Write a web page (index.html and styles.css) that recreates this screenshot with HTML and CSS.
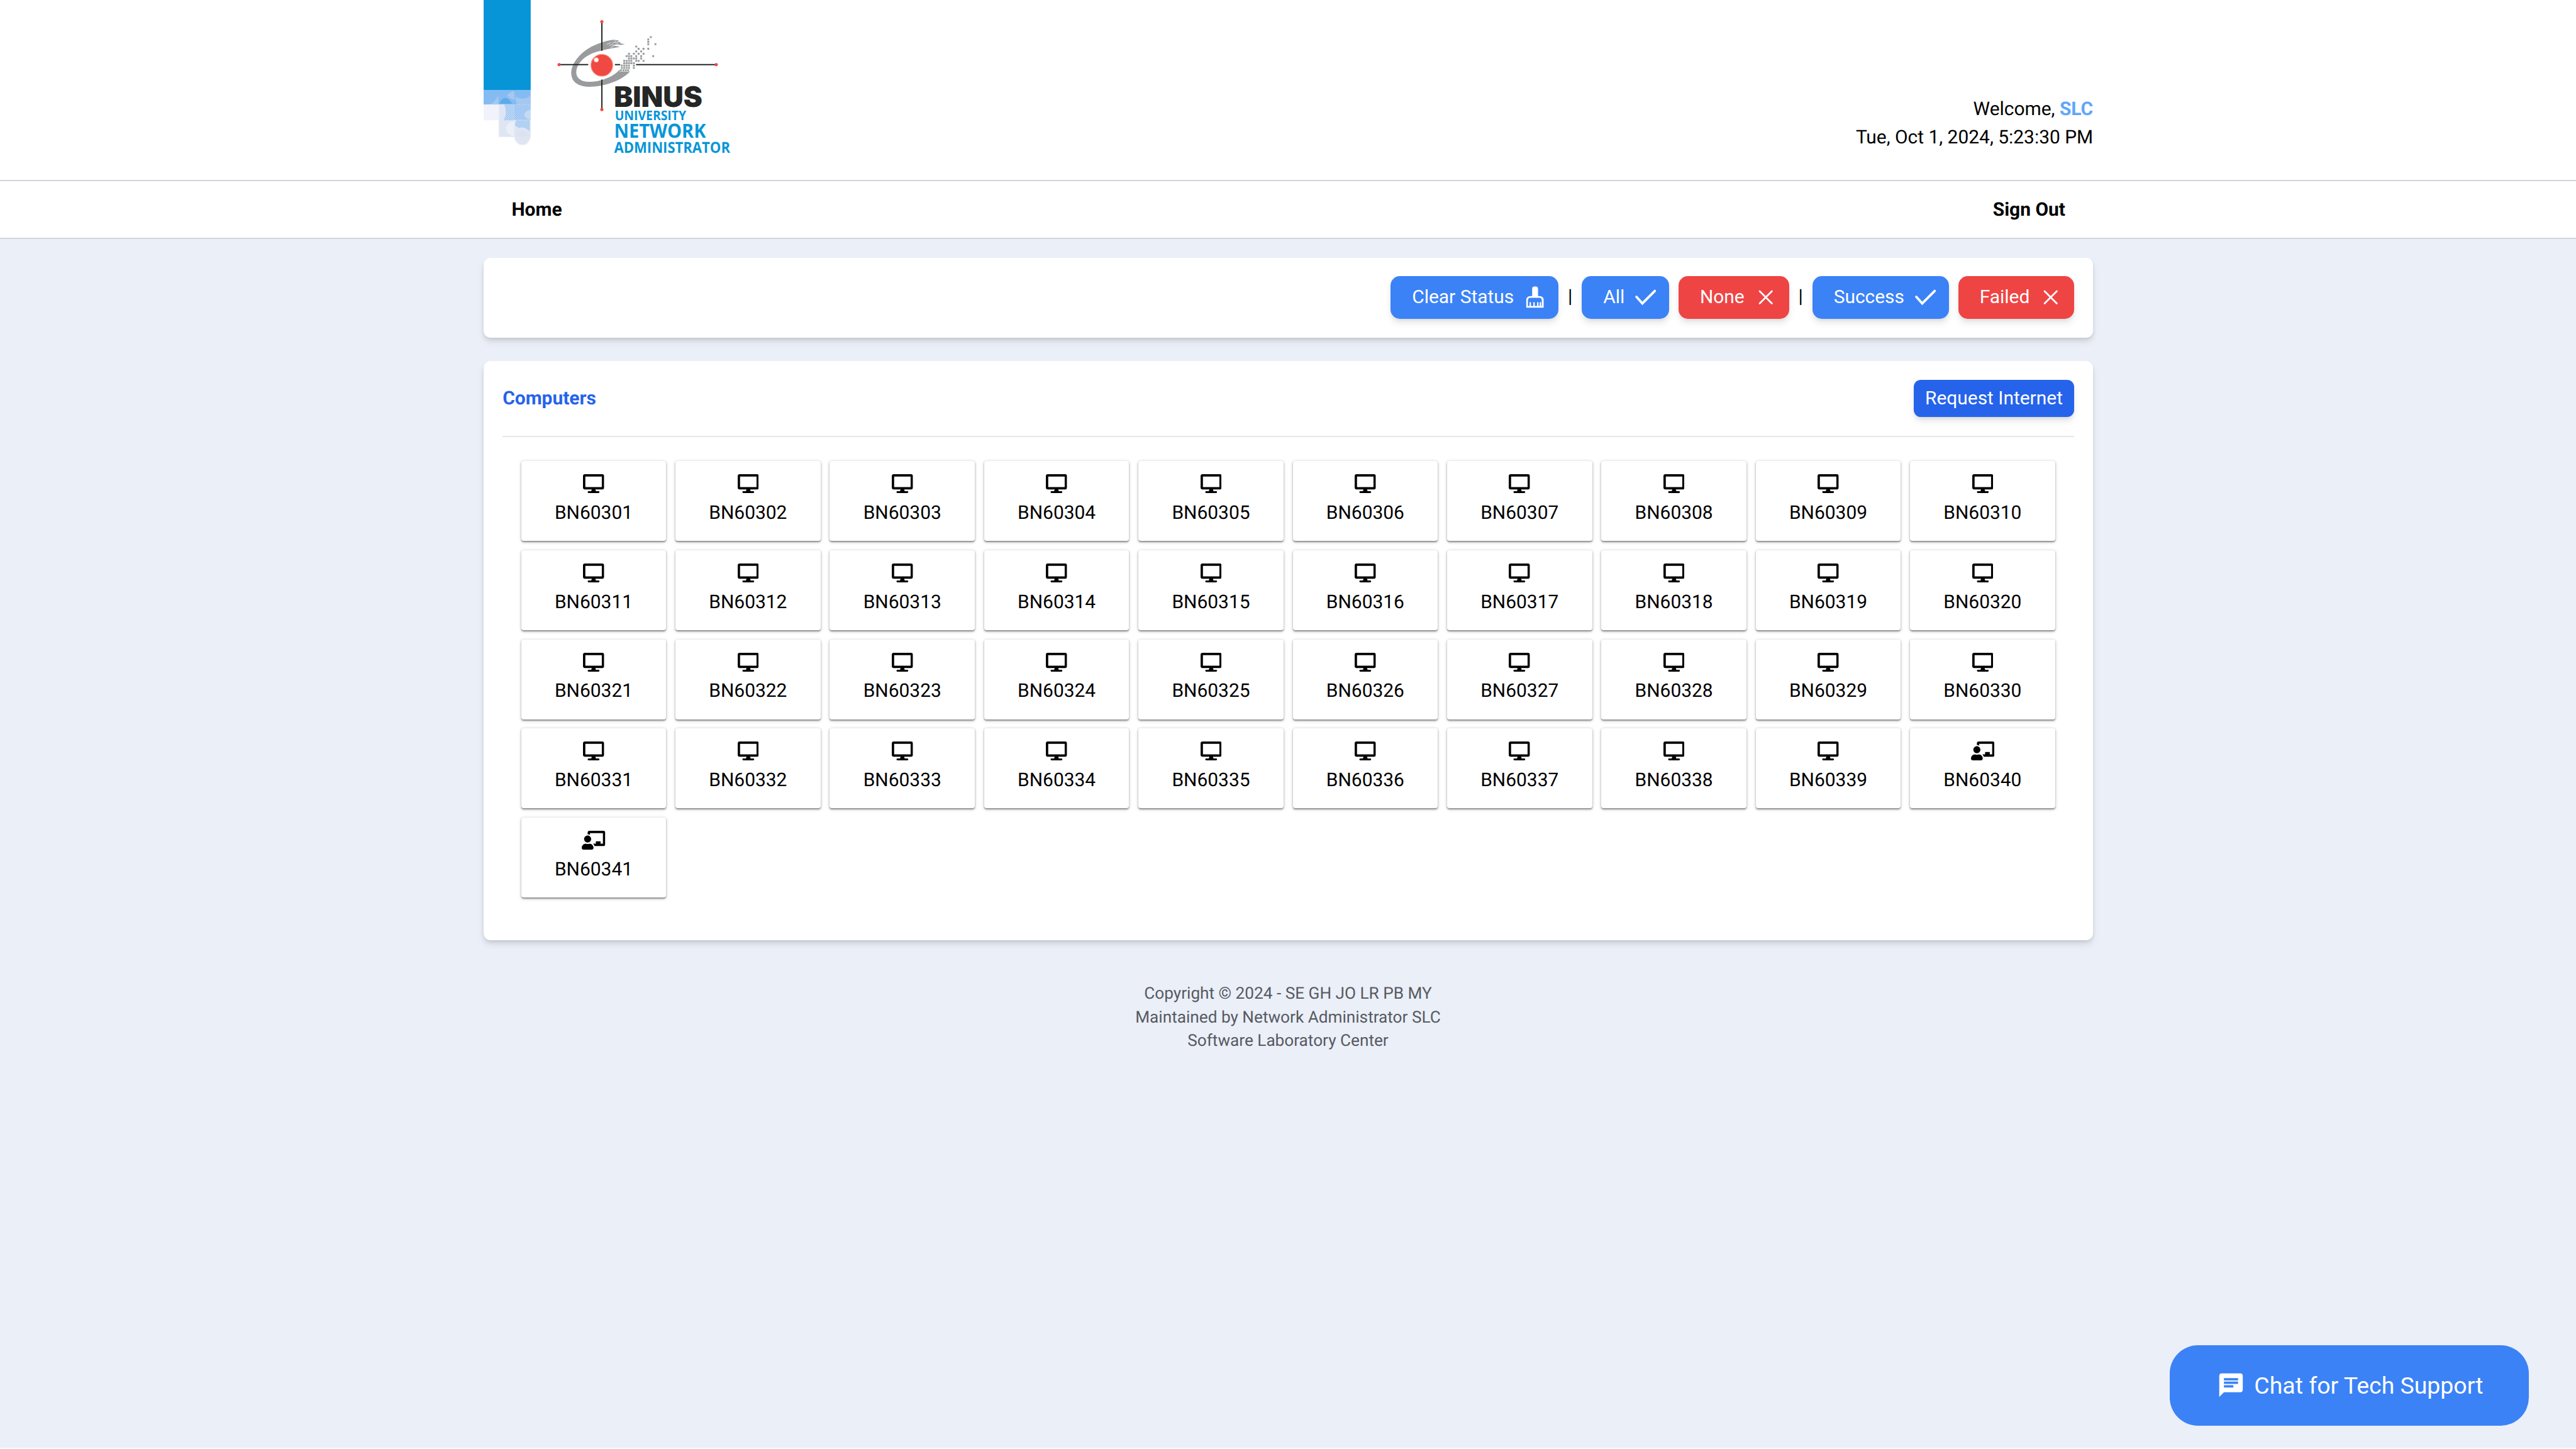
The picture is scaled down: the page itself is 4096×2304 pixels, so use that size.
FILE: index.html
```html
<!DOCTYPE html>
<html lang="en">
<head>
<meta charset="utf-8">
<title>BINUS University Network Administrator</title>
<link rel="stylesheet" href="styles.css">
</head>
<body>
<svg class="sprite" aria-hidden="true">
  <symbol id="desktop" viewBox="0 0 576 512"><path d="M528 0H48C21.5 0 0 21.5 0 48v320c0 26.5 21.5 48 48 48h192l-16 48h-72c-13.3 0-24 10.7-24 24s10.7 24 24 24h272c13.3 0 24-10.7 24-24s-10.7-24-24-24h-72l-16-48h192c26.5 0 48-21.5 48-48V48c0-26.5-21.5-48-48-48zm-16 352H64V64h448v288z"/></symbol>
  <symbol id="teacher" viewBox="0 0 640 512"><path d="M208 352c-2.39 0-4.78.35-7.06 1.09C187.98 357.3 174.35 360 160 360c-14.35 0-27.98-2.7-40.95-6.91-2.28-.74-4.66-1.09-7.05-1.09C49.94 352-.33 402.48 0 464.62.14 490.88 21.73 512 48 512h224c26.27 0 47.86-21.12 48-47.38.33-62.14-49.94-112.62-112-112.62zm-48-32c53.02 0 96-42.98 96-96s-42.98-96-96-96-96 42.98-96 96 42.98 96 96 96zM592 0H208c-26.47 0-48 22.25-48 49.59V96c23.42 0 45.1 6.78 64 17.8V64h352v288h-64v-64H384v64h-76.24c19.1 16.69 33.12 38.73 39.69 64H592c26.47 0 48-22.25 48-49.59V49.59C640 22.25 618.47 0 592 0z"/></symbol>
  <symbol id="check" viewBox="0 0 50 50"><path d="M5.5 24 18 38 44.5 11.500" fill="none" stroke="currentColor" stroke-width="5" stroke-linecap="round"/></symbol>
  <symbol id="cross" viewBox="0 0 50 50"><path d="M12 12 38 38M38 12 12 38" fill="none" stroke="currentColor" stroke-width="3.600" stroke-linecap="round"/></symbol>
  <symbol id="brush" viewBox="0 0 50 50"><path fill-rule="evenodd" d="M19 7q0-5 5-5h2.500q5 0 5 5v15.500h3q9 0 9 9V47H6.500V31.500q0-9 9-9H19zM15.500 26q-5.500 0-5.500 6v11.500h3.500V37q0-2 1.500-2t1.500 2v6.500h5V37q0-2 1.500-2t1.500 2v6.500h5V37q0-2 1.500-2t1.500 2v6.500h2.500V37q0-2 1.500-2t1.500 2v6.500h1.500V32q0-6-5.500-6z"/></symbol>
  <symbol id="chat" viewBox="0 0 24 24"><path d="M20 2H4c-1.100 0-1.990.9-1.990 2L2 22l4-4h14c1.100 0 2-.9 2-2V4c0-1.100-.9-2-2-2zM6 9h12v2H6V9zm8 5H6v-2h8v2zm4-6H6V6h12v2z"/></symbol>
</svg>

<header class="header">
  <div class="container header-inner">
    <svg class="logo" viewBox="0 0 530 350" role="img" aria-label="BINUS University Network Administrator">
      <defs>
        <pattern id="grain" width="4" height="4" patternUnits="userSpaceOnUse"><rect width="2" height="2" fill="#d5dcea"/><rect x="2" y="2" width="2" height="2" fill="#d5dcea"/></pattern>
        <pattern id="grain-blue" width="4" height="4" patternUnits="userSpaceOnUse"><rect width="2" height="2" fill="#84bbf3"/><rect x="2" y="2" width="2" height="2" fill="#84bbf3"/></pattern>
      </defs>
      <path fill="#0795d8" d="M0 0h99v189H0z"/>
      <path fill="#84bbf3" d="M0 189h99v31H0z"/>
      <path fill="url(#grain)" d="M12 220q13-6 19-20v20zM49 201q9-10 15-9 2 10 1 18-8-1-16-9zM66 203q20 10 33-3v20H70z" opacity=".8"/>
      <path fill="#3f9fe4" opacity=".6" d="M33 218q6-12 13-12 8 2 14 12z"/>
      <path fill="#f0f3fb" d="M0 220h32v33H0z"/>
      <path fill="#dfe6f3" d="M32 220h32v68H32z"/>
      <path fill="url(#grain-blue)" d="M44 220h20v33H42q8-14 2-33z"/>
      <path fill="#c4d9f3" d="M64 220h35v33H64z"/>
      <path fill="url(#grain-blue)" d="M64 220h35v10q-12 4-14 12 4 8 14 10H64z"/>
      <path fill="#dfe6f3" d="M64 253h35v35H64z"/>
      <path fill="url(#grain-blue)" d="M68 253h29v23q-14-12-22-6l-9-6z"/>
      <path fill="#ebeff8" d="M64 254q-17 6-17 17t17 16z"/>
      <path fill="#e4e9f4" d="M64 288h35q-2 11-12 17H76q-10-5-12-17z"/>
      <path fill="url(#grain)" d="M68 283q12-17 29 0v5q-2 10-11 15h-9q-8-5-11-15z" opacity=".7"/>
      <g transform="translate(142 30) scale(.33333)">
        <path fill="#999b9c" d="M395 161C345 164 290 186 245 210 170 255 125 320 127 375 130 440 190 460 260 457 370 450 470 400 498 358L490 362H434L430 350C396 393 310 427 240 426 180 425 155 395 159 358 167 295 235 243 320 229 360 218 398 212 435 206L408 200 382 197 414 190 440 194 466 189 434 183 440 176 414 174 430 166z"/>
        <path stroke="#fff" stroke-width="3" fill="none" d="M352 190 378 178M366 199 392 185M388 176 425 183M375 211 394 200M400 168 412 172"/>
        <g stroke="#252827" stroke-width="8"><path d="M320 48V230M320 412V600M50 318H234M402 318H436M536 318H1042"/></g>
        <g fill="#f04842"><circle cx="320" cy="47" r="10"/><circle cx="320" cy="601" r="10"/><circle cx="50" cy="318" r="10"/><circle cx="1042" cy="318" r="10"/></g>
        <circle cx="320" cy="322" r="69" fill="#f04842" stroke="#f99b8d" stroke-width="5"/>
        <circle cx="285" cy="288" r="14" fill="#fff" stroke="#f9a59a" stroke-width="4"/>
        <path fill="#9b9d9f" d="M623 138h12v12h-12zM607 153h12v12h-12zM607 168h12v12h-12zM607 183h12v12h-12zM652 183h12v12h-12zM607 212h12v12h-12zM638 258h12v12h-12zM531 198h12v12h-12zM546 212h12v12h-12zM577 212h12v12h-12zM531 228h12v12h-12zM562 228h12v12h-12zM485 243h12v12h-12zM516 243h12v12h-12zM546 243h12v12h-12zM577 243h12v12h-12zM470 258h12v12h-12zM485 258h12v12h-12zM500 258h12v12h-12zM531 258h12v12h-12zM562 258h12v12h-12zM485 273h12v12h-12zM500 273h12v12h-12zM516 273h12v12h-12zM531 273h12v12h-12zM562 273h12v12h-12zM455 288h12v12h-12zM470 288h12v12h-12zM485 288h12v12h-12zM500 288h12v12h-12zM531 288h12v12h-12zM546 288h12v12h-12zM577 288h12v12h-12zM455 303h12v12h-12zM470 303h12v12h-12zM485 303h12v12h-12zM500 303h12v12h-12zM516 303h12v12h-12zM440 318h12v12h-12zM455 318h12v12h-12zM470 318h12v12h-12zM485 318h12v12h-12zM516 318h12v12h-12zM440 333h12v12h-12zM455 333h12v12h-12zM470 333h12v12h-12zM485 333h12v12h-12zM516 333h12v12h-12zM434 348h12v12h-12zM450 348h12v12h-12zM465 348h12v12h-12zM480 348h12v12h-12z"/>
      </g>
      <text class="logo-binus" x="274" y="224.300" textLength="186" lengthAdjust="spacingAndGlyphs">BINUS</text>
      <text class="logo-line logo-univ" x="276" y="252" textLength="150" lengthAdjust="spacingAndGlyphs">UNIVERSITY</text>
      <text class="logo-line logo-net" x="274.500" y="289.300" textLength="193" lengthAdjust="spacingAndGlyphs">NETWORK</text>
      <text class="logo-line logo-admin" x="274.500" y="321.700" textLength="244" lengthAdjust="spacingAndGlyphs">ADMINISTRATOR</text>
    </svg>
    <div class="welcome">
      <div>Welcome, <b>SLC</b></div>
      <div>Tue, Oct 1, 2024, 5:23:30 PM</div>
    </div>
  </div>
</header>

<nav class="nav">
  <div class="container nav-inner"><a>Home</a><a>Sign Out</a></div>
</nav>

<main class="container">
  <section class="card toolbar">
    <button class="btn blue"><span>Clear Status</span><svg><use href="#brush"/></svg></button>
    <span class="sep">|</span>
    <button class="btn blue"><span>All</span><svg><use href="#check"/></svg></button>
    <button class="btn red"><span>None</span><svg><use href="#cross"/></svg></button>
    <span class="sep">|</span>
    <button class="btn blue"><span>Success</span><svg><use href="#check"/></svg></button>
    <button class="btn red"><span>Failed</span><svg><use href="#cross"/></svg></button>
  </section>

  <section class="card computers">
    <div class="card-head"><h2>Computers</h2><button class="request">Request Internet</button></div>
    <div class="grid" id="grid"></div>
  </section>
</main>

<footer class="footer">
  <div>Copyright © 2024 - SE GH JO LR PB MY</div>
  <div>Maintained by Network Administrator SLC</div>
  <div>Software Laboratory Center</div>
</footer>

<button class="chat"><svg><use href="#chat"/></svg><span>Chat for Tech Support</span></button>
<script src="script.js"></script>
</body>
</html>
```
FILE: styles.css
```css
*, *::before, *::after { box-sizing: border-box; }

html { font-size: 29.93px; }

body {
  margin: 0;
  height: 2304px;
  overflow: hidden;
  background: #ebeff8;
  border-bottom: 2px solid #fbfcfe;
  color: #000;
  font-family: Roboto, "Liberation Sans", sans-serif;
  font-size: 1rem;
  line-height: 1.5;
  text-rendering: geometricPrecision;
}

button { border: 0; padding: 0; font: inherit; color: #fff; }
svg { fill: currentColor; display: block; }
.sprite { display: none; }
.container { width: 2559px; margin: 0 0 0 769.2px; }

.header { height: 288px; background: #fff; border-bottom: 2px solid #d1d5db; }
.header-inner { display: flex; justify-content: space-between; align-items: flex-end; height: 286px; }
.logo { width: 400.68px; height: 264.6px; align-self: flex-start; overflow: visible; }
.logo-binus { font-family: Inter, sans-serif; font-weight: 900; font-size: 59.5px; fill: #252625; }
.logo-line { font-family: "Open Sans", sans-serif; font-weight: 700; fill: #0795d8; }
.logo-univ { font-size: 28px; }
.logo-net { font-size: 41px; }
.logo-admin { font-size: 31.8px; }
.welcome { text-align: right; padding-bottom: 44.3px; }
.welcome b { color: #60a5fa; }

.nav { height: 91.5px; background: #fff; border-bottom: 2px solid #d1d5db; }
.nav-inner { display: flex; justify-content: space-between; align-items: center; height: 91.5px; padding: 1px 1.48rem 0; font-weight: 700; }

.card {
  background: #fff;
  border-radius: .375rem;
  padding: 30px;
  box-shadow: 0 .25rem .375rem -.0625rem rgba(0, 0, 0, .1), 0 .125rem .25rem -.0625rem rgba(0, 0, 0, .1);
}
.toolbar { display: flex; justify-content: flex-end; align-items: center; gap: .5rem; height: 127.5px; margin-top: 30px; }
.btn {
  display: flex;
  align-items: center;
  gap: .5rem;
  height: 67.8px;
  padding: 0 .62rem 0 1.13rem;
  border-radius: .5rem;
  box-shadow: 0 .25rem .375rem -.0625rem rgba(0, 0, 0, .1), 0 .125rem .25rem -.125rem rgba(0, 0, 0, .1);
}
.btn span, .sep { padding-bottom: 2px; }
.btn svg { width: 1.25rem; height: 1.25rem; margin-top: -1px; }
.blue { background: #3b82f6; }
.red { background: #ef4444; }

.computers { margin-top: 36.7px; height: 921px; }
.card-head { display: flex; justify-content: space-between; align-items: center; height: 91.5px; padding-bottom: 30px; border-bottom: 2px solid #e5e7eb; }
h2 { margin: 0; padding-top: 2px; font-size: 1rem; font-weight: 700; color: #2563eb; }
.request {
  height: 59.5px;
  width: 255.5px;
  padding-top: 1px;
  border-radius: .375rem;
  background: #2563eb;
  text-align: center;
  box-shadow: 0 .25rem .375rem -.0625rem rgba(0, 0, 0, .1), 0 .125rem .25rem -.125rem rgba(0, 0, 0, .1);
}
.grid { display: grid; grid-template-columns: repeat(10, 1fr); gap: 14.75px; padding: 38px 30.5px 0 29.5px; }
.tile {
  display: flex;
  flex-direction: column;
  align-items: center;
  height: 127px;
  padding-top: 21px;
  border-radius: .125rem;
  background: #fff;
  box-shadow: 0 1.9px 2px rgba(0, 0, 0, .32), 0 1.9px 5.6px rgba(0, 0, 0, .24);
}
.tile svg { height: 1rem; margin-bottom: 9.8px; }
.desktop { width: 1.125rem; }
.teacher { width: 1.25rem; }

.footer { margin-top: 67.7px; text-align: center; font-size: .875rem; line-height: 1.25rem; color: #565a62; }

.chat {
  position: fixed;
  right: 2.5rem;
  bottom: 1.25rem;
  display: flex;
  align-items: center;
  gap: .5rem;
  width: 571.5px;
  height: 128px;
  padding-left: 2.5rem;
  border-radius: 1.5rem;
  background: #3b82f6;
  font-size: 1.25rem;
  white-space: nowrap;
}
.chat svg { width: 1.5rem; height: 1.5rem; }
```
FILE: script.js
```js
const grid = document.getElementById("grid");
for (let n = 60301; n <= 60341; n++) {
  const icon = n >= 60340 ? "teacher" : "desktop";
  grid.insertAdjacentHTML("beforeend",
    `<div class="tile"><svg class="${icon}"><use href="#${icon}"/></svg><span>BN${n}</span></div>`);
}
```
